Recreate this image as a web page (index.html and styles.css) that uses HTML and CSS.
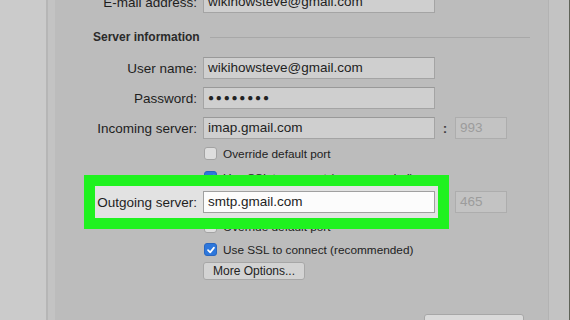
FILE: index.html
```html
<!DOCTYPE html>
<html>
<head>
    <title>Account settings</title>
    <link rel="stylesheet" href="styles.css">
</head>
<body>
    <div class="sidebar"></div>
    <div class="edge"></div>
    <div class="panel">
        <div class="form">
            <div class="row">
                <label class="label">E-mail address:</label>
                <div class="field">wikihowsteve@gmail.com</div>
            </div>
            <div class="section">
                <span class="section-title">Server information</span>
                <span class="rule"></span>
            </div>
            <div class="row">
                <label class="label">User name:</label>
                <div class="field">wikihowsteve@gmail.com</div>
            </div>
            <div class="row">
                <label class="label">Password:</label>
                <div class="field dots">&#9679;&#9679;&#9679;&#9679;&#9679;&#9679;&#9679;&#9679;</div>
            </div>
            <div class="row">
                <label class="label">Incoming server:</label>
                <div class="field">imap.gmail.com</div>
                <span class="colon">:</span>
                <div class="port">993</div>
            </div>
            <div class="check-row first">
                <span class="check"></span>
                <span class="check-text">Override default port</span>
            </div>
            <div class="check-row">
                <span class="check on">
                    <svg width="10" height="10" viewBox="0 0 10 10"><path d="M2 5.2 L4.2 7.4 L8 2.6" fill="none" stroke="#fff" stroke-width="1.7" stroke-linecap="round" stroke-linejoin="round"/></svg>
                </span>
                <span class="check-text">Use SSL to connect (recommended)</span>
            </div>
            <div class="row outgoing">
                <div class="highlight">
                    <label class="label">Outgoing server:</label>
                    <div class="field active">smtp.gmail.com</div>
                </div>
                <div class="port after">465</div>
            </div>
            <div class="check-row">
                <span class="check"></span>
                <span class="check-text">Override default port</span>
            </div>
            <div class="check-row">
                <span class="check on">
                    <svg width="10" height="10" viewBox="0 0 10 10"><path d="M2 5.2 L4.2 7.4 L8 2.6" fill="none" stroke="#fff" stroke-width="1.7" stroke-linecap="round" stroke-linejoin="round"/></svg>
                </span>
                <span class="check-text">Use SSL to connect (recommended)</span>
            </div>
            <div class="button-row">
                <button class="btn">More Options...</button>
            </div>
            <div class="footer">
                <button class="btn advanced">Advanced</button>
            </div>
        </div>
    </div>
    <div class="right-strip"></div>
</body>
</html>
```

FILE: styles.css
```css
body {
    margin: 0;
    width: 570px;
    height: 320px;
    overflow: hidden;
    display: flex;
    font-family: "Liberation Sans", Arial, sans-serif;
    color: #1e1e1e;
    background-color: #bcbcbc;
}

.sidebar {
    width: 46px;
    background-color: #cbcbcb;
}

.edge {
    width: 7px;
    border-left: 2px solid #b6b6b6;
    background-color: #c3c3c3;
}

.panel {
    flex: 1;
    background-color: #bcbcbc;
    overflow: hidden;
}

.right-strip {
    width: 20px;
    border-left: 1px solid #b3b3b3;
    border-right: 1px solid #5f6358;
    background-color: #c3c3c3;
}

.form {
    margin-top: -13px;
}

.row {
    display: flex;
    align-items: center;
    height: 30px;
}

.label {
    width: 142px;
    margin-right: 6px;
    text-align: right;
    font-size: 13.5px;
}

.field {
    width: 222px;
    height: 20px;
    line-height: 20px;
    padding: 0 4px;
    font-size: 13.5px;
    color: #222;
    background-color: #cfcfcf;
    border: 1px solid #a4a4a4;
    border-top-color: #999;
    white-space: nowrap;
}

.dots {
    font-size: 10px;
    letter-spacing: 1.8px;
}

.colon {
    width: 20px;
    text-align: center;
    font-size: 13.5px;
    font-weight: bold;
    color: #444;
}

.port {
    width: 42px;
    height: 20px;
    line-height: 20px;
    padding: 0 4px;
    font-size: 13.5px;
    color: #9c9c9c;
    background-color: #c3c3c3;
    border: 1px solid #adadad;
}

.port.after {
    margin-left: 17px;
}

.section {
    display: flex;
    align-items: center;
    height: 36px;
    padding-top: 4px;
    box-sizing: border-box;
}

.section-title {
    margin-left: 38px;
    font-size: 12px;
    font-weight: bold;
    color: #2a2a2a;
}

.rule {
    flex: 1;
    height: 1px;
    margin: 0 18px 0 10px;
    background-color: #a8a8a8;
}

.check-row {
    display: flex;
    align-items: center;
    height: 23px;
    padding-left: 149px;
}

.check-row.first {
    height: 23px;
    padding-bottom: 2px;
    box-sizing: border-box;
}

.check {
    width: 11px;
    height: 11px;
    border: 1px solid #a3a3a3;
    border-radius: 3px;
    background-color: #dedede;
    display: flex;
    align-items: center;
    justify-content: center;
}

.check.on {
    background-color: #2d77dc;
    border-color: #2866c0;
}

.check-text {
    margin-left: 6px;
    font-size: 11.8px;
    color: #222;
}

.outgoing {
    height: 26px;
}

.highlight {
    display: flex;
    align-items: center;
    height: 32px;
    width: 343px;
    margin-left: 40px;
    background-color: #e2e2e2;
    outline: 11px solid #1ff21f;
    position: relative;
    z-index: 1;
}

.highlight .label {
    width: 102px;
}

.field.active {
    background-color: #fcfcfc;
    border-color: #a0a0a0;
}

.button-row {
    display: flex;
    align-items: center;
    height: 20px;
    padding-left: 148px;
}

.btn {
    font-family: "Liberation Sans", Arial, sans-serif;
    font-size: 12px;
    color: #222;
    height: 18px;
    padding: 0 9px;
    background-color: #d3d3d3;
    border: 1px solid #a7a7a7;
    border-radius: 3px;
}

.footer {
    display: flex;
    justify-content: flex-end;
    margin-top: 33px;
    padding-right: 24px;
}

.advanced {
    width: 100px;
    height: 22px;
    font-size: 13px;
    background-color: #dadada;
}
```
